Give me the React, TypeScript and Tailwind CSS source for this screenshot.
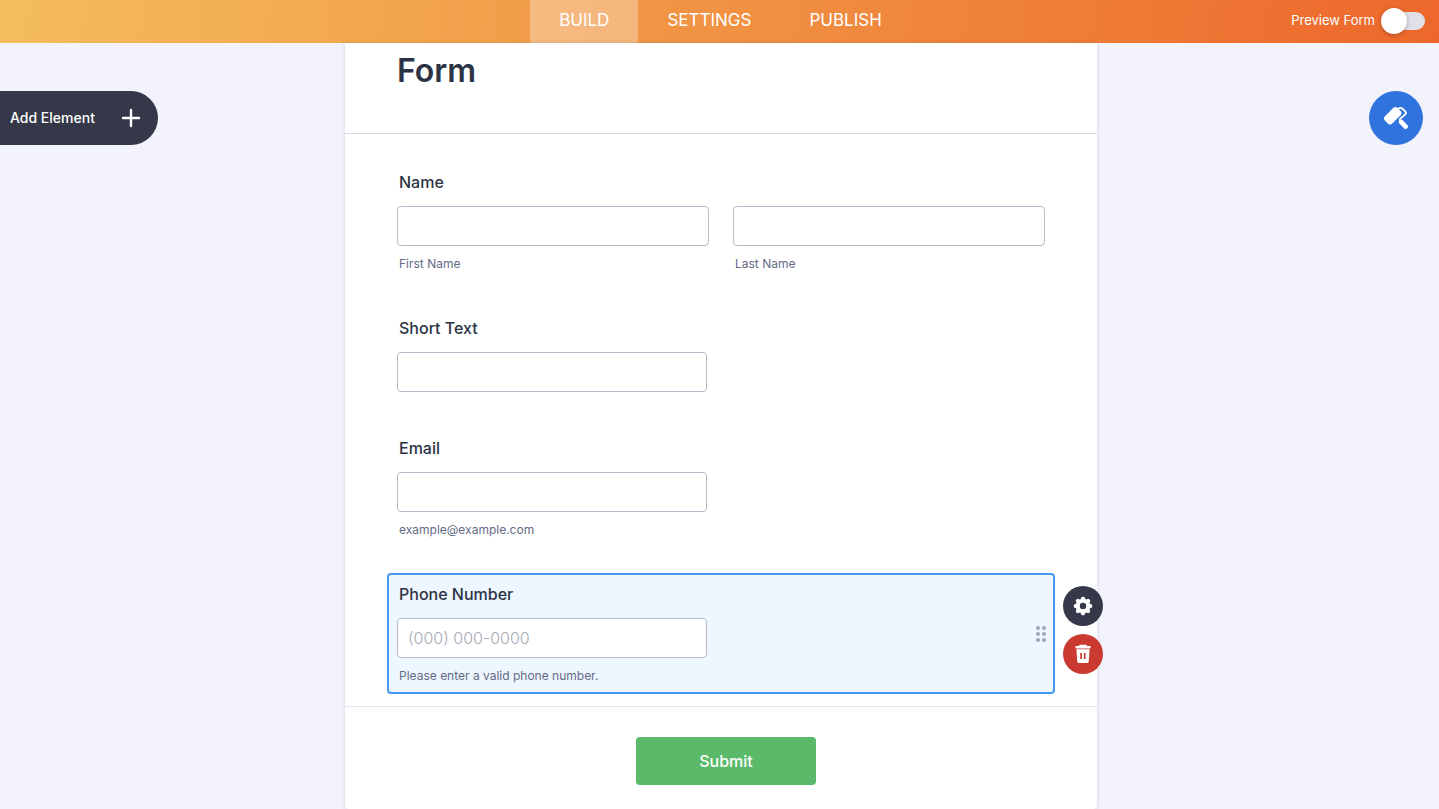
import type { ReactNode } from "react";

interface FieldProps {
  id: string;
  label: string;
  hint?: string;
  placeholder?: string;
  type?: string;
}

const tabs = [
  { label: "BUILD", active: true },
  { label: "SETTINGS", active: false },
  { label: "PUBLISH", active: false },
];

const inputClass =
  "block h-10 w-full rounded border border-[#b8bacb] bg-white px-2.5 text-base font-light text-[#2c3345] placeholder:text-[#a5a9b5] focus:outline-none";
const labelClass = "block pl-0.5 text-base leading-[22px] font-medium text-[#2c3345]";
const hintClass = "mt-2.5 block pl-0.5 text-xs leading-4 text-[#646b85]";

function GearIcon() {
  return (
    <svg viewBox="0 0 20 20" className="size-5" aria-hidden="true">
      <g fill="#fff">
        {[0, 45, 90, 135, 180, 225, 270, 315].map((angle) => (
          <path key={angle} d="M7 4.6 8.6 1.100Q10 .3 11.400 1.100L13 4.600Z" transform={`rotate(${angle} 10 10)`} />
        ))}
      </g>
      <circle cx="10" cy="10" r="5.1" fill="none" stroke="#fff" strokeWidth="3.800" />
    </svg>
  );
}

function TrashIcon() {
  return (
    <svg viewBox="0 0 20 20" className="size-5" aria-hidden="true">
      <path
        fill="#fff"
        d="M6.6 .8h6.800l.7 1.200H17a.6.6 0 0 1 .6.6v1.200a.6.6 0 0 1-.6.6H3a.6.6 0 0 1-.6-.6V2.600A.6.6 0 0 1 3 2h2.900Z"
      />
      <path
        fill="#fff"
        fillRule="evenodd"
        d="M3.400 5.200h13.200l-.8 12a2 2 0 0 1-2 1.900H6.200a2 2 0 0 1-2-1.900ZM7.200 9v6h1.700V9Zm3.700 0v6h1.700V9Z"
      />
    </svg>
  );
}

function RollerIcon() {
  return (
    <svg viewBox="0 0 24 24" className="size-6" fill="none" stroke="#fff" aria-hidden="true">
      <rect x="-0.3" y="4.500" width="18" height="10.400" rx="3.500" fill="#fff" stroke="none" transform="rotate(-45 8.700 9.700)" />
      <path
        d="M13.600 3.200 14.600 2.400Q16.600 1.300 18.200 2.500L21.300 5.300Q22.600 6.900 21.300 8.400L16.400 12.400Q15.600 13.300 16.100 15"
        strokeWidth="1.900"
        strokeLinecap="round"
      />
      <path d="M17.100 15.900 21.600 20.600" strokeWidth="4.600" strokeLinecap="round" />
    </svg>
  );
}

function DragDots() {
  return (
    <svg viewBox="0 0 10 16" className="h-4 w-2.5" fill="#9fa6b5" aria-hidden="true">
      {[2, 8, 14].map((y) => (
        <g key={y}>
          <circle cx="2" cy={y} r="2" />
          <circle cx="8" cy={y} r="2" />
        </g>
      ))}
    </svg>
  );
}

function FormRow({ children }: { children: ReactNode }) {
  return <div className="rounded border-2 border-transparent p-2">{children}</div>;
}

function Field({ id, label, hint, placeholder, type = "text" }: FieldProps) {
  return (
    <div className="w-full max-w-[310px]">
      <label htmlFor={id} className={labelClass}>
        {label}
      </label>
      <input id={id} type={type} placeholder={placeholder} className={`mt-[13px] ${inputClass}`} />
      {hint && <span className={hintClass}>{hint}</span>}
    </div>
  );
}

export default function App() {
  return (
    <div className="flex min-h-screen flex-col bg-[#f3f3fe] font-['Inter',sans-serif] text-[#2c3345]">
      <header className="grid h-[43px] grid-cols-[1fr_auto_1fr] items-stretch bg-linear-[97deg] from-[#f4bd5b] to-[#ed672b] text-white">
        <div />
        <nav className="flex pl-0.5">
          {tabs.map((tab) => (
            <a
              key={tab.label}
              href="#"
              className={`flex items-center px-[29px] pb-0.5 text-[17px] ${tab.active ? "bg-white/30" : ""}`}
            >
              {tab.label}
            </a>
          ))}
        </nav>
        <div className="flex items-center justify-end gap-2 pr-3.5 pb-0.5">
          <label htmlFor="preview" className="text-[13px]">
            Preview Form
          </label>
          <input
            id="preview"
            type="checkbox"
            role="switch"
            className="relative h-[18px] w-[42px] appearance-none rounded-full bg-[#e0e1e8] before:absolute before:-top-1 before:-left-0.5 before:size-[26px] before:rounded-full before:bg-white before:shadow-[0_1px_4px_rgba(0,0,0,0.3)]"
          />
        </div>
      </header>

      <main className="grid flex-1 grid-cols-[1fr_minmax(0,752px)_1fr] pl-[3px]">
        <div className="-ml-[3px] pt-12">
          <button
            type="button"
            className="flex h-[54px] w-[158px] items-center justify-between rounded-r-full bg-[#353849] pr-[17px] pl-2.5 text-sm font-medium text-white"
          >
            Add Element
            <svg viewBox="0 0 20 20" className="size-5" stroke="#fff" strokeWidth="2.400" strokeLinecap="round" aria-hidden="true">
              <path d="M10 2v16M2 10h16" />
            </svg>
          </button>
        </div>

        <form className="flex flex-col rounded-b bg-white shadow-[0_0_4px_rgba(84,95,111,0.2)]">
          <div className="border-b border-[#d6d8e1] px-[52px] pt-2 pb-[42px]">
            <h1 className="text-[32px] leading-10 font-semibold">Form</h1>
          </div>

          <div className="flex flex-col gap-[25px] px-[42px] pt-[27px] pb-3">
            <FormRow>
              <fieldset>
                <legend className={labelClass}>Name</legend>
                <div className="mt-[13px] grid grid-cols-2 gap-6">
                  <div>
                    <input id="first-name" type="text" className={inputClass} />
                    <label htmlFor="first-name" className={hintClass}>
                      First Name
                    </label>
                  </div>
                  <div>
                    <input id="last-name" type="text" className={inputClass} />
                    <label htmlFor="last-name" className={hintClass}>
                      Last Name
                    </label>
                  </div>
                </div>
              </fieldset>
            </FormRow>

            <FormRow>
              <Field id="short-text" label="Short Text" />
            </FormRow>

            <FormRow>
              <Field id="email" label="Email" type="email" hint="example@example.com" />
            </FormRow>

            <div className="relative flex items-center justify-between rounded border-2 border-[#4499f0] bg-[#eef6ff] p-2">
              <Field
                id="phone"
                label="Phone Number"
                type="tel"
                placeholder="(000) 000-0000"
                hint="Please enter a valid phone number."
              />
              <button type="button" aria-label="Move field" className="-mr-px">
                <DragDots />
              </button>
              <div className="absolute top-[11px] left-full ml-2.5 flex flex-col gap-2">
                <button
                  type="button"
                  aria-label="Field properties"
                  className="flex size-10 items-center justify-center rounded-full bg-[#353849]"
                >
                  <GearIcon />
                </button>
                <button
                  type="button"
                  aria-label="Delete field"
                  className="flex size-10 items-center justify-center rounded-full bg-[#cb3a31]"
                >
                  <TrashIcon />
                </button>
              </div>
            </div>
          </div>

          <div className="flex justify-center border-t border-[#e6e6f2] pt-[30px] pb-6 pl-2.5">
            <button type="button" className="h-12 w-[180px] rounded bg-[#5aba69] text-base font-medium text-white">
              Submit
            </button>
          </div>
        </form>

        <div className="flex items-start justify-end pt-12 pr-4">
          <button
            type="button"
            aria-label="Form designer"
            className="flex size-[54px] items-center justify-center rounded-full bg-[#3173de]"
          >
            <RollerIcon />
          </button>
        </div>
      </main>
    </div>
  );
}
